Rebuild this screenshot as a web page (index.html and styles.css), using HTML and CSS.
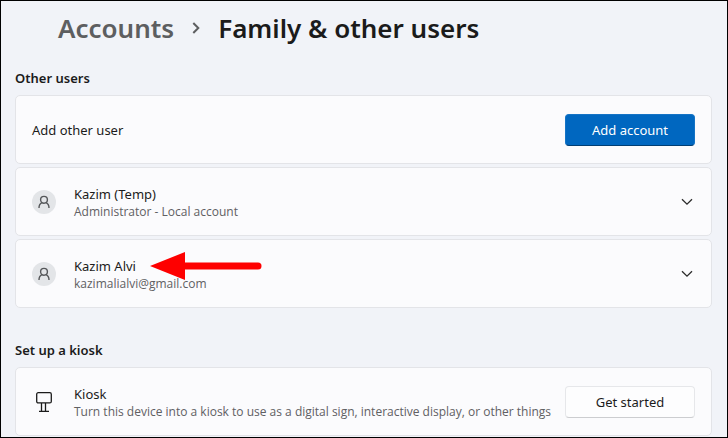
FILE: index.html
```
<!DOCTYPE html>
<html lang="en">
<head>
  <meta charset="UTF-8">
  <title>Settings - Family &amp; other users</title>
  <link rel="stylesheet" href="styles.css">
</head>
<body>
  <main class="page">
    <h1 class="breadcrumb">
      <a href="#">Accounts</a>
      <svg class="separator" width="8" height="12" viewBox="0 0 8 12"><path d="M1.3 1 L6.3 6 L1.3 11"/></svg>
      <span>Family &amp; other users</span>
    </h1>

    <section>
      <h2>Other users</h2>
      <div class="card">
        <p class="name">Add other user</p>
        <button type="button" class="btn primary">Add account</button>
      </div>
      <div class="card">
        <span class="avatar">
          <svg width="14" height="14" viewBox="0 0 14 14"><circle cx="7" cy="4.8" r="3.4"/><path d="M2 13 C2 10 3.3 8.4 5 7.7 M12 13 C12 10 10.7 8.4 9 7.7"/></svg>
        </span>
        <div class="info">
          <p class="name">Kazim (Temp)</p>
          <p class="detail">Administrator - Local account</p>
        </div>
        <button type="button" class="expand" aria-label="Show options for Kazim (Temp)">
          <svg width="12" height="8" viewBox="0 0 12 8"><path d="M1 1.2 L6 6.2 L11 1.2"/></svg>
        </button>
      </div>
      <div class="card">
        <span class="avatar">
          <svg width="14" height="14" viewBox="0 0 14 14"><circle cx="7" cy="4.8" r="3.4"/><path d="M2 13 C2 10 3.3 8.4 5 7.7 M12 13 C12 10 10.7 8.4 9 7.7"/></svg>
        </span>
        <div class="info">
          <p class="name marked">Kazim Alvi
            <svg class="arrow" width="112" height="28" viewBox="0 0 112 28"><path class="shaft" d="M30 14 H108"/><path class="head" d="M0 14 L35 0 V28 Z"/></svg>
          </p>
          <p class="detail">kazimalialvi@gmail.com</p>
        </div>
        <button type="button" class="expand" aria-label="Show options for Kazim Alvi">
          <svg width="12" height="8" viewBox="0 0 12 8"><path d="M1 1.2 L6 6.2 L11 1.2"/></svg>
        </button>
      </div>
    </section>

    <section>
      <h2>Set up a kiosk</h2>
      <div class="card">
        <span class="kiosk">
          <svg width="16" height="20" viewBox="0 0 16 20"><rect x="0.7" y="0.7" width="14.6" height="10.2" rx="1.5"/><path d="M5.5 11 V19 M9.5 11 V19 M3 19.3 H13"/></svg>
        </span>
        <div class="info">
          <p class="name">Kiosk</p>
          <p class="detail">Turn this device into a kiosk to use as a digital sign, interactive display, or other things</p>
        </div>
        <button type="button" class="btn">Get started</button>
      </div>
    </section>
  </main>
</body>
</html>
```
FILE: styles.css
```
* {
  box-sizing: border-box;
}
body {
  margin: 0;
  font-family: "Segoe UI", "Noto Sans", sans-serif;
  color: #1b1b1b;
  background-color: #f1f3f8;
}
h1, h2, p {
  margin: 0;
}
.page {
  min-height: 100vh;
  padding: 8px 15px 0 14px;
  border: 1px solid #000;
}
.breadcrumb {
  display: flex;
  align-items: center;
  gap: 18px;
  padding-left: 43px;
  font-size: 26px;
  font-weight: 600;
  line-height: 38px;
}
.breadcrumb a {
  color: #5d5e60;
  text-decoration: none;
}
svg {
  display: block;
  fill: none;
  stroke: #2b2b2b;
}
.separator {
  stroke: #5d5e60;
  stroke-width: 2;
}
section {
  display: flex;
  flex-direction: column;
  gap: 3px;
}
section + section {
  margin-top: 11px;
}
h2 {
  padding: 21px 0 4px;
  font-size: 13px;
  font-weight: 600;
  line-height: 20px;
}
.card {
  display: flex;
  align-items: center;
  min-height: 69px;
  padding: 0 16px;
  background-color: #fbfbfd;
  border: 1px solid #e3e4e8;
  border-radius: 5px;
}
.avatar, .kiosk {
  display: flex;
  align-items: center;
  justify-content: center;
  width: 24px;
  height: 24px;
  margin-right: 18px;
}
.avatar {
  background-color: #e3e5e8;
  border-radius: 50%;
}
.avatar svg {
  stroke: #55575a;
  stroke-width: 1.4;
}
.kiosk svg {
  stroke: #1b1b1b;
  stroke-width: 1.3;
}
.name {
  font-size: 13px;
  line-height: 20px;
}
.detail {
  font-family: "Segoe UI", "Open Sans", sans-serif;
  font-size: 12px;
  line-height: 16px;
  color: #5f6063;
}
.marked {
  position: relative;
  width: max-content;
}
.arrow {
  position: absolute;
  top: -4px;
  left: 76px;
}
.arrow .shaft {
  stroke: #fe0000;
  stroke-width: 7;
  stroke-linecap: round;
}
.arrow .head {
  fill: #fe0000;
  stroke: none;
}
.btn, .expand {
  flex: none;
  margin-left: auto;
  padding: 0;
  font: inherit;
}
.btn {
  width: 130px;
  height: 32px;
  font-size: 13px;
  color: #1b1b1b;
  background-color: #fdfdfe;
  border: 1px solid #e6e7ea;
  border-bottom-color: #cccdd0;
  border-radius: 4px;
}
.btn.primary {
  color: #fff;
  background-color: #0067c0;
  border-color: #1473c5;
  border-bottom-color: #003e73;
}
.expand {
  display: flex;
  align-items: center;
  justify-content: center;
  width: 16px;
  height: 32px;
  background: none;
  border: none;
}
.expand svg {
  stroke-width: 1.3;
}
```
